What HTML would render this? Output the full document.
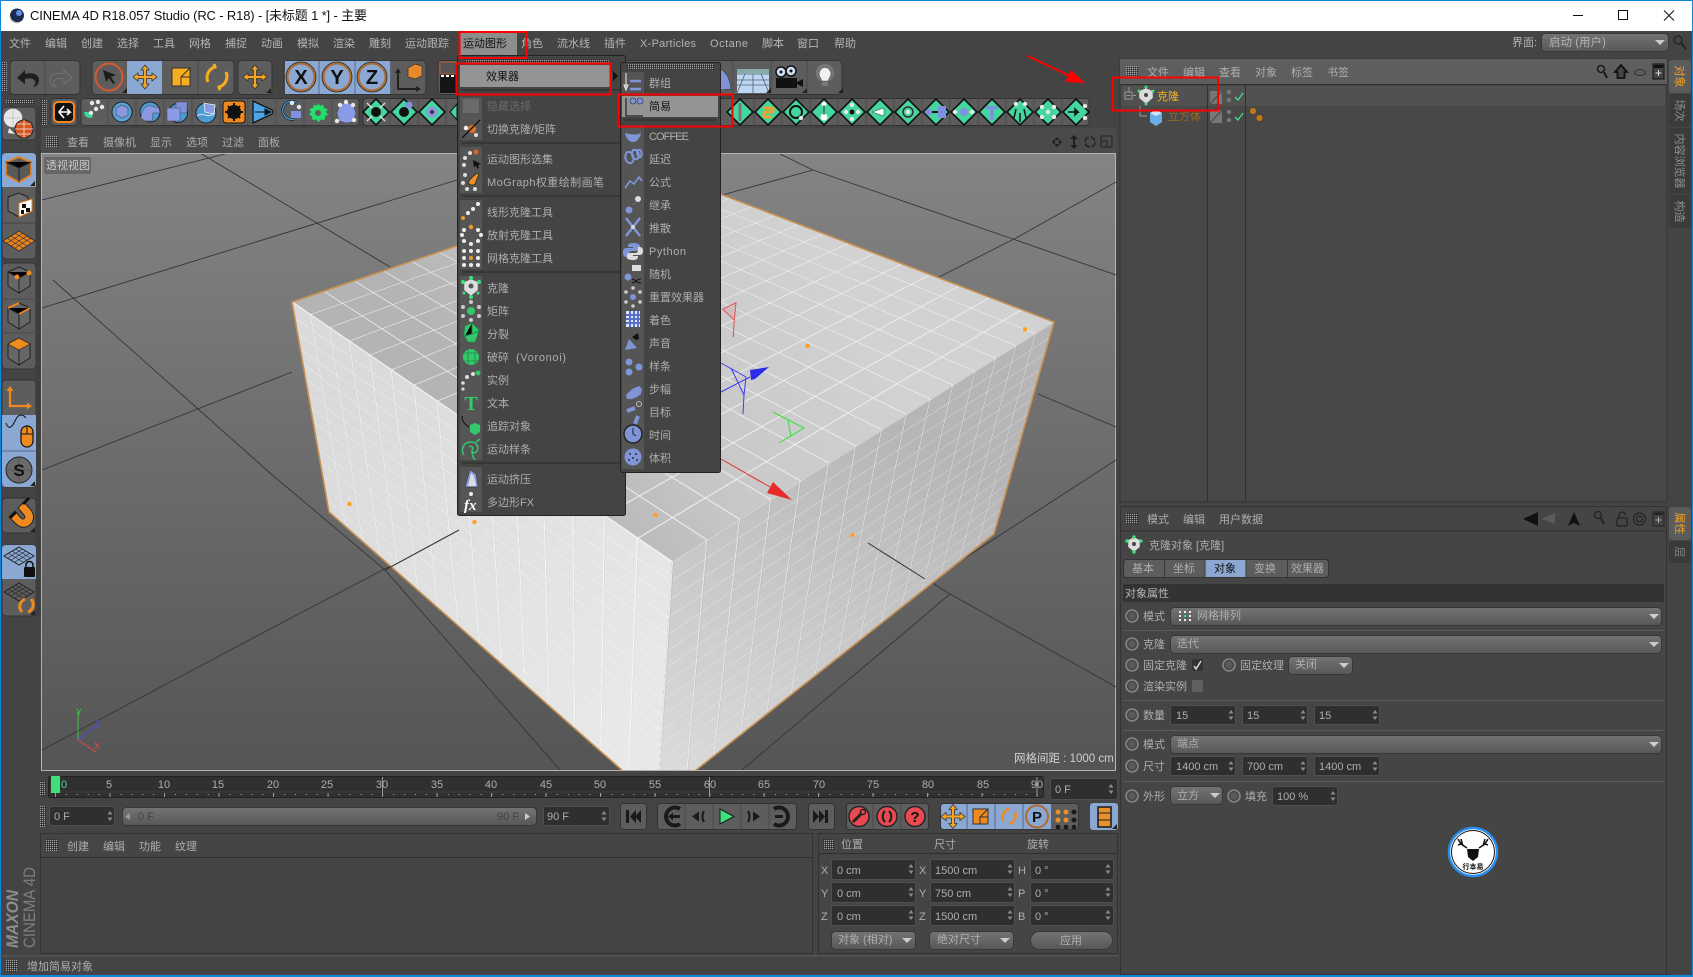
<!DOCTYPE html>
<html><head><meta charset="utf-8"><title>CINEMA 4D</title>
<style>
html,body{margin:0;padding:0;background:#444;width:1693px;height:977px;overflow:hidden}
svg{display:block}
text{font-family:"Liberation Sans","Noto Sans CJK SC",sans-serif;font-size:11px;fill:#aeaeae}
.m{fill:#b4b4b4}
.d{fill:#6a6a6a}
.k{fill:#111}
.g{fill:#5d5d5d;stroke:#333}
.b{fill:#8ba8d2}
.f{fill:#2f2f2f;stroke:#4f4f4f}
.dd{fill:url(#dg);stroke:#383838}
.sep{stroke:#5d5d5d;stroke-width:1}
.fc{position:absolute;left:0;top:0;width:1500px;height:1500px;transform-origin:0 0}
.ft{background-image:repeating-linear-gradient(90deg,rgba(246,246,246,.85) 0 3px,transparent 3px 100px),repeating-linear-gradient(180deg,rgba(246,246,246,.85) 0 3px,transparent 3px 100px);transform:matrix3d(.37409,-.05319,0,.00018477,.12083,.06252,0,-.00019717,0,0,1,0,292,302,0,1)}
.fl{background-image:repeating-linear-gradient(90deg,rgba(250,250,250,.85) 0 3px,rgba(0,0,0,.03) 3px 6px,transparent 6px 100px),repeating-linear-gradient(180deg,rgba(250,250,250,.85) 0 3px,transparent 3px 100px);transform:matrix3d(.12044,.06219,0,-.00019776,.05647,.18948,0,.00009665,0,0,1,0,292,302,0,1)}
.fr{background-image:repeating-linear-gradient(90deg,rgba(242,242,242,.8) 0 3px,rgba(0,0,0,.06) 3px 6px,transparent 6px 100px),repeating-linear-gradient(180deg,rgba(242,242,242,.8) 0 3px,transparent 3px 100px);transform:matrix3d(.52235,-.07822,0,.00025397,.07819,.26686,0,.00013424,0,0,1,0,672,562,0,1)}
</style></head><body>
<svg width="1693" height="977" viewBox="0 0 1693 977" xmlns="http://www.w3.org/2000/svg">
<defs>
<pattern id="grip" width="2" height="2" patternUnits="userSpaceOnUse"><rect width="1" height="1" fill="#a4a4a4"/><rect x="1" y="1" width="1" height="1" fill="#2a2a2a"/></pattern>
<pattern id="tick" width="10.91" height="4" x="55" patternUnits="userSpaceOnUse"><rect width="1" height="1" y="2" fill="#aaa"/></pattern>
<linearGradient id="vp" x1="0" y1="0" x2="0" y2="1"><stop offset="0" stop-color="#848484"/><stop offset=".5" stop-color="#6c6c6c"/><stop offset="1" stop-color="#555"/></linearGradient>
<linearGradient id="dg" x1="0" y1="0" x2="0" y2="1"><stop offset="0" stop-color="#747474"/><stop offset="1" stop-color="#575757"/></linearGradient>
<linearGradient id="top" gradientUnits="userSpaceOnUse" x1="520" y1="470" x2="830" y2="270"><stop offset="0" stop-color="#b4b4b4"/><stop offset=".45" stop-color="#c8c8c8"/><stop offset="1" stop-color="#d2d2d2"/></linearGradient>
<linearGradient id="rf" gradientUnits="userSpaceOnUse" x1="880" y1="420" x2="700" y2="780"><stop offset="0" stop-color="#b6b6b6"/><stop offset="1" stop-color="#dadada"/></linearGradient>
<linearGradient id="lf" gradientUnits="userSpaceOnUse" x1="330" y1="400" x2="660" y2="680"><stop offset="0" stop-color="#dadada"/><stop offset="1" stop-color="#e8e8e8"/></linearGradient>
<clipPath id="vc"><rect x="42" y="154" width="1074" height="616"/></clipPath>
<g id="sp"><path d="M0-5l2.500 3.500h-5zM0 5l2.500-3.500h-5z" fill="#8a8a8a"/></g>
<g id="ar"><path d="M-5-2h10l-5 5z" fill="#ccc"/></g>
<g id="cr"><path d="M0 0h5v-5z" fill="#222"/></g>
<g id="rd"><circle r="6" fill="#484848" stroke="#858585" stroke-width="1.600"/><circle r="3.600" fill="#5a5a5a"/></g>
<g id="di"><path d="M0-13L13 0 0 13-13 0z" fill="#45d6a0" stroke="#111" stroke-width="1.600"/></g>
<g id="mv"><path d="M0-12l4 5h-2.500v5.500H7V-4l5 4-5 4V1.500H1.500V7H4l-4 5-4-5h2.500V1.500H-7V4l-5-4 5-4v2.500h5.500V-7H-4z" fill="#f6a623" stroke="#333" stroke-width=".8"/></g>
<g id="dt"><circle cx="0" cy="0" r="2.200" fill="#e8e8e8"/></g>
</defs>

<rect width="1693" height="977" fill="#444"/>
<!-- title -->
<rect x="1" y="1" width="1691" height="30" fill="#fff"/>
<rect width="1693" height="1" fill="#0f86d8"/><rect width="1" height="977" fill="#0f86d8"/><rect x="1692" width="1" height="977" fill="#0f86d8"/><rect y="975" width="1693" height="2" fill="#0f86d8"/>
<circle cx="17" cy="15.500" r="7" fill="#1c2a52"/><circle cx="19" cy="13" r="3" fill="#5f8fe0"/><path d="M10 16a7 7 0 0 0 10 6" stroke="#bbb" stroke-width="1.200" fill="none"/>
<text x="30" y="20" style="font-size:13px;fill:#111" textLength="337">CINEMA 4D R18.057 Studio (RC - R18) - [未标题 1 *] - 主要</text>
<path d="M1573 15.500h10" stroke="#111" stroke-width="1"/><rect x="1618.500" y="10.500" width="9" height="9" fill="none" stroke="#111"/><path d="M1664 10.500l10 10M1674 10.500l-10 10" stroke="#111"/>

<!-- menu bar -->
<rect x="459" y="32" width="58" height="24" fill="#8d8d8d"/>
<text class="m" x="9" y="47">文件</text><text class="m" x="45" y="47">编辑</text><text class="m" x="81" y="47">创建</text><text class="m" x="117" y="47">选择</text><text class="m" x="153" y="47">工具</text><text class="m" x="189" y="47">网格</text><text class="m" x="225" y="47">捕捉</text><text class="m" x="261" y="47">动画</text><text class="m" x="297" y="47">模拟</text><text class="m" x="333" y="47">渲染</text><text class="m" x="369" y="47">雕刻</text><text class="m" x="405" y="47">运动跟踪</text>
<text class="k" x="463" y="47">运动图形</text>
<text class="m" x="521" y="47">角色</text><text class="m" x="557" y="47">流水线</text><text class="m" x="604" y="47">插件</text><text class="m" x="640" y="47" textLength="56">X-Particles</text><text class="m" x="710" y="47" textLength="38">Octane</text><text class="m" x="762" y="47">脚本</text><text class="m" x="797" y="47">窗口</text><text class="m" x="834" y="47">帮助</text>
<text class="m" x="1512" y="46">界面:</text>
<rect x="1541.500" y="33.500" width="127" height="18" rx="4" class="dd"/><text class="m" x="1549" y="46" style="font-size:11.500px">启动 (用户)</text><use href="#ar" x="1660" y="42"/>
<circle cx="1678" cy="40" r="4" fill="none" stroke="#222" stroke-width="1.300"/><path d="M1681 43l5 6" stroke="#222" stroke-width="2"/>

<!-- toolbar row 1 -->
<rect x="10" y="60.500" width="70" height="34" rx="4" class="g"/><path d="M45 61v33" stroke="#4c4c4c"/>
<path d="M17 78l8-8v4c7-2 14 0 14 6 0 4-3 7-6 7 2-2 3-4 2-6-2-3-6-3-10-2v5z" fill="#1e1e1e"/>
<path d="M72 78l-8-8v4c-7-2-14 0-14 6 0 4 3 7 6 7-2-2-3-4-2-6 2-3 6-3 10-2v5z" fill="none" stroke="#6e6e6e" stroke-width="1.300"/>

<rect x="92" y="60.500" width="142" height="34" rx="4" class="g"/><rect x="127" y="61" width="35" height="33" class="b"/><path d="M198 61v33" stroke="#4c4c4c"/>
<circle cx="109" cy="77" r="13.500" fill="#5d5d5d" stroke="#d9582e" stroke-width="2"/><path d="M103 70l13 5-5 2 4 6-2 1-4-6-3 4z" fill="#1c1c1c"/><use href="#cr" x="122" y="93"/>
<use href="#mv" x="145" y="77"/>
<rect x="172" y="68" width="18" height="18" fill="#f6ae1e" stroke="#333"/><path d="M181 86v-9h9M181 77l9-9" stroke="#333" stroke-width="1" fill="none"/>
<path d="M208 82a11 11 0 0 1 7-15l-1-3M226 72a11 11 0 0 1-7 15l1 3" fill="none" stroke="#f6ae1e" stroke-width="3"/>
<rect x="238" y="60.500" width="34" height="34" rx="4" class="g"/><use href="#mv" x="255" y="77"/><use href="#cr" x="266" y="93"/>

<rect x="284" y="60.500" width="142" height="34" rx="4" class="g"/><rect x="285" y="61" width="105" height="33" class="b"/><path d="M319 61v33M355 61v33M391 61v33" stroke="#586a8c"/>
<circle cx="301" cy="77" r="13.500" fill="#8ba8d2" stroke="#b06a2a" stroke-width="2"/><circle cx="301" cy="77" r="15" fill="none" stroke="#222" stroke-width=".8"/><text x="301" y="84" text-anchor="middle" class="k" style="font-size:20px;font-weight:bold">X</text>
<circle cx="337" cy="77" r="13.500" fill="#8ba8d2" stroke="#b06a2a" stroke-width="2"/><circle cx="337" cy="77" r="15" fill="none" stroke="#222" stroke-width=".8"/><text x="337" y="84" text-anchor="middle" class="k" style="font-size:20px;font-weight:bold">Y</text>
<circle cx="372" cy="77" r="13.500" fill="#8ba8d2" stroke="#b06a2a" stroke-width="2"/><circle cx="372" cy="77" r="15" fill="none" stroke="#222" stroke-width=".8"/><text x="372" y="84" text-anchor="middle" class="k" style="font-size:20px;font-weight:bold">Z</text>
<path d="M398 72v17h18" fill="none" stroke="#222" stroke-width="2"/><path d="M398 68l3 5h-6zM421 89l-5-3v6z" fill="#222"/><path d="M408 68l7-4 7 2v10l-7 3-7-2z" fill="#e88a2a" stroke="#333" stroke-width=".7"/>

<rect x="438" y="60.500" width="404" height="34" rx="4" class="g"/>
<rect x="440" y="62" width="18" height="31" fill="#151515"/><rect x="440" y="62" width="18" height="12" fill="#555" stroke="#c05a30"/><path d="M441 76h16" stroke="#fff" stroke-dasharray="3 2" stroke-width="2"/>
<path d="M720 69c6 2 10 10 11 20l-11 1z" fill="#8192da" stroke="#333" stroke-width=".6"/><path d="M733 61v33M771 61v33M807 61v33" stroke="#4c4c4c"/>
<rect x="737" y="69" width="32" height="24" fill="#bcd6f4"/><path d="M737 80h32M737 85h32M747 69l-10 24M753 69v24M759 69l10 24M737 74h32" stroke="#56606e" stroke-width=".8"/><rect x="737" y="69" width="32" height="5" fill="#8aa"/>
<use href="#cr" x="766" y="93"/><use href="#cr" x="802" y="93"/><use href="#cr" x="838" y="93"/>
<circle cx="781" cy="72" r="5" fill="#cfdff5" stroke="#111" stroke-width="1.500"/><circle cx="791" cy="71" r="5" fill="#cfdff5" stroke="#111" stroke-width="1.500"/><circle cx="781" cy="72" r="1.500" fill="#111"/><circle cx="791" cy="71" r="1.500" fill="#111"/><rect x="776" y="78" width="21" height="10" fill="#111"/><path d="M797 82l6-3v8l-6-3z" fill="#111"/>
<circle cx="825" cy="73" r="9" fill="#8c8c8c" opacity=".6"/><path d="M819 74a6 6.500 0 1 1 12 0c0 3-2.500 4-2.500 7h-7c0-3-2.500-4-2.500-7z" fill="#f0f0f0" stroke="#444" stroke-width=".6"/><rect x="822" y="82" width="6" height="4" fill="#777"/>

<!-- toolbar row 2 -->
<rect x="51" y="98.500" width="26" height="27" rx="3" class="g"/><rect x="54" y="102" width="20" height="20" rx="4" fill="#111" stroke="#f08a1e" stroke-width="2"/><path d="M60 112h10l-3-3M70 112l-3 3M64 106l-5 6 5 6" stroke="#fff" stroke-width="1.600" fill="none"/>
<rect x="81" y="98.500" width="278" height="27" rx="3" class="g"/>
<path d="M108 99v26M136 99v26M164 99v26M192 99v26M220 99v26M248 99v26M276 99v26M304 99v26M332 99v26" stroke="#4c4c4c"/>
<path d="M84 112c1 6 5 7 9 5l-2-5z" fill="#3dd598"/><use href="#dt" x="92" y="103"/><use href="#dt" x="98" y="102"/><use href="#dt" x="96" y="109"/><use href="#dt" x="102" y="107"/><use href="#dt" x="91" y="113"/>
<circle cx="122" cy="112" r="10" fill="#57a2d8" stroke="#222"/><path d="M122 105l6 3v7l-6 3-6-3v-7z" fill="#8a9ae0" stroke="#444" stroke-width=".6"/>
<circle cx="150" cy="112" r="10" fill="#4b9bd4" stroke="#222"/><path d="M141 118c1-9 5-13 10-12l8 2 1 5-7 0-1 8-7 0z" fill="#8a9ae0" stroke="#444" stroke-width=".5"/>
<circle cx="178" cy="113" r="9.500" fill="#4b9bd4" stroke="#222"/><rect x="176" y="102" width="11" height="11" fill="#7f90e0" stroke="#444" stroke-width=".5"/><rect x="167" y="108" width="13" height="13" fill="#8a9ae6" stroke="#444" stroke-width=".5"/>
<circle cx="206" cy="113" r="10" fill="#4b9bd4" stroke="#222"/><path d="M204 103l11 2-1 9-9-2zM197 116c6-5 10 3 17-2" fill="#8a9ae0" stroke="#eee" stroke-width=".8"/>
<rect x="223" y="101" width="22" height="22" rx="3" fill="#f08a1e" stroke="#111"/><circle cx="234" cy="112" r="7" fill="#111"/><circle cx="234" cy="112" r="2.500" fill="#f08a1e"/><path d="M234 103v18M225 112h18M228 106l12 12M240 106l-12 12" stroke="#111" stroke-width="2"/>
<path d="M253 101l19 9q2 2 0 4l-19 9z" fill="#4ba6e8" stroke="#111" stroke-width="1.300"/><path d="M255 112h10v-3l6 3-6 3v-3" fill="#111" stroke="#111"/>
<path d="M297 103a9 9 0 1 0-3 16" fill="none" stroke="#111" stroke-width="2.500"/><path d="M297 103a9 9 0 1 0-3 16" fill="none" stroke="#4ba6e8" stroke-width="1.200"/><rect x="291" y="111" width="10" height="7" fill="#7f90e0"/><use href="#dt" x="292" y="103"/><use href="#dt" x="299" y="107"/>
<path d="M318 103l2 3 3-1.500 1 3.500 3.500 1-1.500 3 2 2.500-3 2-.5 3.500-3.500-.5-2.500 2.500-2.500-2.500-3.500.5-.5-3.500-3-2 2-2.500-1.500-3 3.500-1 1-3.500 3 1.500z" fill="#22e06a"/><circle cx="318" cy="113" r="3" fill="#5d5d5d"/>
<path d="M340 105l6-3 7 3 3 8-3 9-7 1-7-2-2-8z" fill="#8a9ae6" stroke="#444" stroke-width=".5"/><use href="#dt" x="340" y="105"/><use href="#dt" x="353" y="105"/><use href="#dt" x="337" y="121"/><use href="#dt" x="354" y="120"/><use href="#dt" x="346" y="102"/>

<rect x="363" y="98.500" width="726" height="27" rx="3" class="g"/>
<path d="M390 99v26M418 99v26M446 99v26M754 99v26M782 99v26M810 99v26M838 99v26M866 99v26M894 99v26M922 99v26M950 99v26M978 99v26M1006 99v26M1034 99v26M1062 99v26" stroke="#4c4c4c"/>
<use href="#di" x="376" y="112"/><circle cx="376" cy="112" r="5" fill="#111"/><path d="M367 103l5 5M385 103l-5 5M367 121l5-5M385 121l-5-5" stroke="#ddd" stroke-width="1.500"/>
<use href="#di" x="404" y="112"/><circle cx="404" cy="112" r="5" fill="#111"/><circle cx="409" cy="105" r="3.500" fill="#7f90e0"/>
<use href="#di" x="432" y="112"/><circle cx="432" cy="112" r="5.500" fill="#8a9ae0"/><circle cx="432" cy="112" r="2" fill="#333"/>
<path d="M457 104l-7 8 7 8z" fill="#45d6a0" stroke="#111"/>
<use href="#di" x="740" y="112"/><path d="M740 103v18" stroke="#777" stroke-width="3"/>
<use href="#di" x="768" y="112"/><path d="M763 108h8c3 0 3 4 0 4h-5c-3 0-3 5 0 5h6" stroke="#f0a030" stroke-width="3" fill="none"/>
<use href="#di" x="796" y="112"/><circle cx="796" cy="112" r="6" fill="none" stroke="#111" stroke-width="2"/><use href="#dt" x="801" y="118"/>
<use href="#di" x="824" y="112"/><circle cx="824" cy="104" r="2.500" fill="#fff"/><circle cx="824" cy="117" r="3.500" fill="#fff"/><path d="M824 105v10" stroke="#333"/>
<use href="#di" x="852" y="112"/><circle cx="852" cy="112" r="2.500" fill="#111"/><use href="#dt" x="852" y="105"/><use href="#dt" x="846" y="112"/><use href="#dt" x="858" y="112"/><use href="#dt" x="852" y="119"/>
<use href="#di" x="880" y="112"/><path d="M872 112l12-4v8z" fill="#fff" stroke="#333" stroke-width=".5"/>
<use href="#di" x="908" y="112"/><circle cx="908" cy="112" r="5" fill="none" stroke="#333" stroke-width="1.500"/><use href="#dt" x="908" y="112"/>
<use href="#di" x="936" y="112"/><circle cx="929" cy="112" r="3.500" fill="#7f90e0"/><rect x="938" y="106" width="8" height="12" fill="#7f90e0"/><path d="M932 112h6" stroke="#111" stroke-width="2"/>
<use href="#di" x="964" y="112"/><circle cx="964" cy="112" r="4" fill="#7f90e0"/><use href="#dt" x="955" y="112"/><use href="#dt" x="972" y="112"/>
<use href="#di" x="992" y="112"/><path d="M986 106h12v3h-4v11h-4v-11h-4z" fill="#7f90e0"/>
<use href="#di" x="1020" y="112"/><path d="M1020 122v-9M1014 118l2-9M1026 118l-2-9" stroke="#111" stroke-width="1.500"/><use href="#dt" x="1016" y="104"/><use href="#dt" x="1025" y="104"/>
<use href="#di" x="1048" y="112"/><use href="#dt" x="1048" y="112"/><use href="#dt" x="1042" y="107"/><use href="#dt" x="1054" y="107"/><use href="#dt" x="1042" y="117"/><use href="#dt" x="1054" y="117"/>
<use href="#di" x="1076" y="112"/><path d="M1068 112h10l-3-3v6l3-3" stroke="#111" fill="none" stroke-width="1.500"/><use href="#dt" x="1085" y="106"/><use href="#dt" x="1085" y="118"/>
<rect x="41" y="99" width="6" height="26" fill="url(#grip)"/><rect x="2" y="62" width="5" height="30" fill="url(#grip)"/><rect x="6" y="99" width="28" height="5" fill="url(#grip)"/>

<!-- left toolbar -->
<rect x="2" y="107" width="34" height="33" rx="4" class="g"/>
<circle cx="13" cy="118" r="9.500" fill="#e8e8e8" stroke="#777" stroke-width=".6"/><path d="M13 109v18M4 118h18" stroke="#aaa" stroke-width=".5"/><path d="M9 128l6 6-7-1z" fill="#e8e8e8"/>
<circle cx="24" cy="129" r="9" fill="#d8541e" stroke="#222"/><path d="M24 120v18M15 129h18M17 124h14M17 134h14" stroke="#eee" stroke-width=".7"/>
<rect x="2" y="153" width="34" height="106" rx="4" class="g"/><path d="M2 157q0-4 4-4h26q4 0 4 4v30H2z" class="b"/><path d="M2 223h34" stroke="#444"/>
<path d="M19 157l12 5v13l-12 7-13-7v-13z" fill="#5a5a5a" stroke="#e8821e" stroke-width="1.800"/><path d="M6 162l13 6 12-6M19 168v14" stroke="#222" stroke-width="1"/><use href="#cr" x="30" y="186"/>
<path d="M8 197l11-4 9 4v14l-9 6-11-6z" fill="#6c6c6c" stroke="#222"/><path d="M19 203l13-4v12l-13 6z" fill="#fff" stroke="#e8821e"/><path d="M22 204h4v4h-4zM26 208h4v4h-4zM21 210h3v4h-3z" fill="#111"/>
<path d="M19 231l16 10-16 10-16-10z" fill="#e8821e" stroke="#333"/><path d="M11 236l16 10M15 233l16 10M7 238l16 10M23 233l-16 10M27 236l-16 10M31 238l-16 10" stroke="#333" stroke-width=".7"/>
<rect x="2" y="263" width="34" height="106" rx="4" class="g"/><path d="M2 299h34M2 333h34" stroke="#4c4c4c"/>
<path d="M8 272l11-5 11 5v14l-11 7-11-7z" fill="#666" stroke="#222"/><path d="M8 272l11 6 11-6M19 278v15" stroke="#222"/><circle cx="17" cy="277" r="2.500" fill="#f08a1e"/><circle cx="29" cy="273" r="2.500" fill="#f08a1e"/>
<path d="M8 308l11-5 11 5v14l-11 7-11-7z" fill="#666" stroke="#222"/><path d="M8 308l11 6 11-6M19 314v15" stroke="#222"/><path d="M8 308l11-5M19 314l11-6" stroke="#f08a1e" stroke-width="1.800"/>
<path d="M8 344l11-6 11 6v14l-11 7-11-7z" fill="#666" stroke="#222"/><path d="M8 344l11-6 11 6-11 6z" fill="#f08a1e" stroke="#222" stroke-width=".6"/><path d="M19 350v15" stroke="#222"/>
<rect x="2" y="380" width="34" height="107" rx="4" class="g"/><path d="M2 415h34v68q0 4-4 4H6q-4 0-4-4z" class="b"/><path d="M2 451h34" stroke="#586a8c"/>
<path d="M10 389v17h19" fill="none" stroke="#f08a1e" stroke-width="2.200"/><path d="M10 386l3.500 5h-7zM32 406l-5-3.500v7z" fill="#f08a1e"/>
<rect x="21" y="426" width="12" height="21" rx="6" fill="#f08a1e" stroke="#111" stroke-width="1.200"/><path d="M21 434h12M27 426v8" stroke="#111"/><path d="M6 423c4 10 8 0 10-4s6-6 10-1" stroke="#111" fill="none" stroke-width="1"/>
<circle cx="19" cy="470" r="13" fill="#6a6a6a" stroke="#222"/><path d="M19 457v26M6 470h26" stroke="#555"/><text x="19" y="476" text-anchor="middle" class="k" style="font-size:17px;font-weight:bold">S</text><use href="#cr" x="30" y="486"/>
<rect x="2" y="498" width="34" height="35" rx="4" class="g"/><path d="M9 517l6-6 6 7c3 3 5-1 3-3l-6-7 6-6 7 8c5 7 2 15-5 17-5 1-8-1-11-4z" fill="#f08a1e" stroke="#222"/><path d="M9 517l6-6 2 2-6 6zM22 503l6-6 2 2-6 6z" fill="#111"/><use href="#cr" x="30" y="532"/>
<rect x="2" y="545" width="34" height="71" rx="4" class="g"/><path d="M2 549q0-4 4-4h26q4 0 4 4v30H2z" class="b"/>
<path d="M19 547l15 9-15 9-15-9z" fill="none" stroke="#222"/><path d="M12 551l15 9M15.500 549l15 9M8 553l15 9M26 551l-15 9M22.500 549l-15 9M30 553l-15 9" stroke="#222" stroke-width=".6"/><rect x="24" y="567" width="11" height="10" rx="1" fill="#111"/><path d="M26 568v-3a3.500 3.500 0 0 1 7 0v3" fill="none" stroke="#111" stroke-width="1.500"/>
<path d="M19 583l15 9-15 9-15-9z" fill="none" stroke="#222"/><path d="M12 587l15 9M15.500 585l15 9M8 589l15 9M26 587l-15 9M22.500 585l-15 9M30 589l-15 9" stroke="#222" stroke-width=".6"/><path d="M22 612a8 8 0 0 1 3-13M31 599a8 8 0 0 1-3 13" fill="none" stroke="#f08a1e" stroke-width="3"/><use href="#cr" x="30" y="615"/>
<path d="M36 107h5v510h-5z" fill="#3e3e3e"/>

<!-- viewport -->
<rect x="41" y="128" width="1075" height="26" fill="#4a4a4a"/>
<rect x="46" y="136" width="12" height="11" fill="url(#grip)"/>
<text x="67" y="146">查看</text><text x="103" y="146">摄像机</text><text x="150" y="146">显示</text><text x="186" y="146">选项</text><text x="222" y="146">过滤</text><text x="258" y="146">面板</text>
<g fill="#1f1f1f"><path d="M1057 137l3 3h-6zM1057 147l3-3h-6zM1052 142l3-3v6zM1062 142l-3-3v6z"/><path d="M1074 135l4 4h-3v6h3l-4 4-4-4h3v-6h-3z"/></g>
<circle cx="1090" cy="142" r="5" fill="none" stroke="#222" stroke-width="1.500" stroke-dasharray="6 2"/><rect x="1101" y="136" width="11" height="11" rx="1" fill="none" stroke="#222"/><path d="M1101 141h6v6" fill="none" stroke="#222"/>
<rect x="41.500" y="153.500" width="1074" height="617" fill="url(#vp)" stroke="#b4b4b4"/>
<g clip-path="url(#vc)">
<g stroke="#353535" stroke-width=".9" fill="none">
<path d="M42 200L225 154M200 153L390 267M42 308L457 180M42 470L292 372M53 280L270 473L385 570L560 770M42 750L270 629L459 530M939 277L1016 238L1116 182M1038 394L1116 427M813 170L1010 238L1116 275M722 195L813 170M931 580L1116 460M868 543L950 594L1116 687M950 594L742 770M813 170L780 154"/>
</g>
<path d="M292 302L668 174 1054 322 672 562z" fill="url(#top)"/>
<path d="M292 302L672 562 657 801 329 512z" fill="url(#lf)"/>
<path d="M672 562L1054 322 994 534 657 801z" fill="url(#rf)"/>
</g>
</svg>

<!-- cube clone grid (projective CSS mapping) -->
<div style="position:absolute;left:42px;top:154px;width:1074px;height:616px;overflow:hidden"><div style="position:absolute;left:-42px;top:-154px;width:0;height:0"><div class="fc ft"></div><div class="fc fl"></div><div class="fc fr"></div></div></div>

<svg width="1693" height="977" viewBox="0 0 1693 977" xmlns="http://www.w3.org/2000/svg" style="position:absolute;left:0;top:0">
<g clip-path="url(#vc)">
<path d="M292 302L668 174 1054 322 994 534 657 801 329 512z" fill="none" stroke="#c89050" stroke-width="1.600"/>
<path d="M459 530L385 570M868 543L925 579" stroke="#333" stroke-width="1"/>
<g fill="#ffa020"><circle cx="349.500" cy="504" r="2.200"/><circle cx="474.500" cy="522" r="2.200"/><circle cx="655.500" cy="515" r="2.200"/><circle cx="852.500" cy="535" r="2.200"/><circle cx="807.500" cy="346" r="2.200"/><circle cx="1025" cy="329.500" r="2.200"/></g>
<path d="M722.700 309.300L736 302.700 734.300 320zM734.300 320L733.300 337" fill="#d8a0a0" fill-opacity=".4" stroke="#e05050" stroke-width="1"/>
<path d="M721 363L746 377M746 377L744 395 743 414M731 368L744 395M721 392L750 377" stroke="#3a3af0" stroke-width="1" fill="none"/><path d="M750 370L769 367 755 379 751 380z" fill="#2a2ae8"/>
<path d="M773 412L804 428 779 443M788 420L791 436" stroke="#2ee03a" stroke-width="1" fill="none"/>
<path d="M721 459L770 487" stroke="#e83030" stroke-width="1"/><path d="M773 482L792 500 767 493z" fill="#e82a2a"/>
<g stroke="#333" fill="none"><path d="M78 740l0-28" stroke="#3cc83c" stroke-width="1"/><path d="M78 740l18 -14" stroke="#4a4ae0" stroke-width="1"/><path d="M78 740l18 12" stroke="#e04a4a" stroke-width="1"/></g>
<text x="76" y="715" style="font-size:9px;fill:#3cc83c">Y</text><text x="95" y="727" style="font-size:9px;fill:#4a4ae0">Z</text><text x="94" y="749" style="font-size:9px;fill:#e04a4a">X</text>
</g>
<rect x="44" y="157" width="47" height="17" rx="2" fill="#666"/><text x="46" y="169" style="fill:#c8c8c8">透视视图</text>
<rect x="1011" y="750" width="102" height="18" fill="#555"/><text x="1014" y="762" style="fill:#d0d0d0;font-size:11.500px">网格间距 : 1000 cm</text>

<!-- main menu -->
<rect x="457.500" y="55.500" width="168" height="460" rx="2" fill="#444" stroke="#222"/>
<rect x="465" y="59" width="145" height="4" fill="url(#grip)"/>
<rect x="460" y="65" width="150" height="22" fill="#949494"/>
<text class="k" x="486" y="80">效果器</text><path d="M613 71l5 5-5 5z" fill="#111"/>
<path d="M462 90h160M462 143h160M462 196h160M462 272h160M462 463h160" stroke="#333" stroke-width="1.500"/>
<rect x="460" y="97" width="22" height="43" fill="#555"/><rect x="460" y="147" width="22" height="46" fill="#555"/><rect x="460" y="200" width="22" height="69" fill="#555"/><rect x="460" y="276" width="22" height="184" fill="#555"/><rect x="460" y="467" width="22" height="45" fill="#555"/>
<text x="487" y="110" class="d">隐藏选择</text><text x="487" y="133">切换克隆/矩阵</text><text x="487" y="163">运动图形选集</text><text x="487" y="186" textLength="117">MoGraph权重绘制画笔</text><text x="487" y="216">线形克隆工具</text><text x="487" y="239">放射克隆工具</text><text x="487" y="262">网格克隆工具</text><text x="487" y="292">克隆</text><text x="487" y="315">矩阵</text><text x="487" y="338">分裂</text><text x="487" y="361">破碎</text><text x="516" y="361" textLength="50">(Voronoi)</text><text x="487" y="384">实例</text><text x="487" y="407">文本</text><text x="487" y="430">追踪对象</text><text x="487" y="453">运动样条</text><text x="487" y="483">运动挤压</text><text x="487" y="506">多边形FX</text>
<rect x="463" y="99" width="16" height="14" fill="#6a6a6a"/>
<circle cx="466" cy="128" r="2.200" fill="#fff"/><circle cx="476" cy="135" r="2" fill="#ddd"/><circle cx="472" cy="129" r="4" fill="#e0702a"/><path d="M462 138l18-18" stroke="#111" stroke-width="1.300"/>
<circle cx="464" cy="165" r="2" fill="#ddd"/><circle cx="465" cy="158" r="2" fill="#ddd"/><circle cx="470" cy="153" r="2" fill="#ddd"/><circle cx="476" cy="152" r="2.500" fill="#e0602a"/><path d="M473 160l8 4-3 1 1 3-2 .5-1-3-2 2z" fill="#111"/>
<circle cx="465" cy="175" r="2" fill="#ddd"/><circle cx="463" cy="183" r="2" fill="#ddd"/><circle cx="467" cy="189" r="2" fill="#ddd"/><circle cx="475" cy="189" r="2" fill="#ddd"/><path d="M468 183c2-5 6-7 9-10l2 1-4 10c-2 2-5 1-7-1z" fill="#e8902a" stroke="#111" stroke-width=".6"/>
<circle cx="463" cy="218" r="2" fill="#f09a30"/><circle cx="468" cy="213" r="2" fill="#eee"/><circle cx="473" cy="209" r="2" fill="#eee"/><circle cx="478" cy="204" r="2" fill="#eee"/>
<g fill="#eee"><circle cx="471" cy="227" r="2.200" fill="#f09a30"/><circle cx="478" cy="230" r="2"/><circle cx="481" cy="235" r="2"/><circle cx="478" cy="241" r="2"/><circle cx="471" cy="244" r="2"/><circle cx="464" cy="241" r="2"/><circle cx="462" cy="235" r="2"/><circle cx="464" cy="230" r="2"/></g>
<g fill="#eee"><circle cx="464" cy="251" r="2"/><circle cx="471" cy="251" r="2"/><circle cx="478" cy="251" r="2"/><circle cx="464" cy="258" r="2"/><circle cx="471" cy="258" r="2" fill="#f09a30"/><circle cx="478" cy="258" r="2"/><circle cx="464" cy="265" r="2"/><circle cx="471" cy="265" r="2"/><circle cx="478" cy="265" r="2"/></g>
<path d="M464 282l7-3 7 3 0 8-7 6-7-6z" fill="#ddd" stroke="#666" stroke-width=".5"/><circle cx="471" cy="286" r="2.500" fill="#555"/><g fill="#3de07a"><circle cx="471" cy="278" r="2"/><circle cx="463" cy="282" r="2"/><circle cx="479" cy="282" r="2"/><circle cx="471" cy="297" r="2"/><circle cx="464" cy="293" r="1.500"/><circle cx="478" cy="293" r="1.500"/></g>
<g fill="#ccc"><circle cx="471" cy="302" r="2"/><circle cx="463" cy="307" r="2"/><circle cx="479" cy="307" r="2"/><circle cx="463" cy="316" r="2"/><circle cx="479" cy="316" r="2"/><circle cx="471" cy="320" r="2"/></g><circle cx="471" cy="311" r="4" fill="#35c86a"/>
<path d="M465 326l7-3 4 4 3 3-2 7-2 5-7 0-4-7z" fill="#35c86a" stroke="#1c8a4a" stroke-width=".7"/><path d="M472 323v11l-7 2M472 334l7-3" stroke="#1c8a4a"/>
<circle cx="471" cy="357" r="8" fill="#35c86a"/><path d="M464 353h14M464 361h14M468 349v16M475 349v16" stroke="#1c8a4a" stroke-width=".8"/>
<circle cx="463" cy="389" r="1.600" fill="#ddd"/><circle cx="463" cy="383" r="1.800" fill="#ddd"/><circle cx="467" cy="377" r="2" fill="#ddd"/><circle cx="473" cy="374" r="2" fill="#ddd"/><circle cx="478" cy="373" r="2.500" fill="#35c86a"/>
<text x="471" y="410" text-anchor="middle" style="font-family:'Liberation Serif',serif;font-size:20px;font-weight:bold;fill:#35c86a">T</text>
<path d="M462 416c0 5 2 8 7 11" stroke="#111" fill="none"/><path d="M470 425l5-2 5 2v7l-5 3-5-3z" fill="#35c86a"/>
<path d="M464 455c-4-6 0-13 7-13 6 0 8 5 6 9-2 3-5 2-5-1 2-2 0-5-3-3M472 450c0 5 1 8 3 10M476 442l4-3" fill="none" stroke="#35c86a" stroke-width="1.500"/>
<path d="M470 470l6 4 2 13h-13z" fill="#8a9ae6" stroke="#333" stroke-width=".5"/><path d="M471 473c3 2 4 6 5 13h-8z" fill="#ddd"/>
<circle cx="471" cy="494" r="2" fill="#eee"/><text x="464" y="510" style="font-family:'Liberation Serif',serif;font-size:15px;font-weight:bold;font-style:italic;fill:#fff">fx</text>

<!-- submenu -->
<rect x="620.500" y="62.500" width="100" height="410" rx="2" fill="#444" stroke="#222"/>
<rect x="627" y="64" width="87" height="6" fill="url(#grip)"/>
<rect x="622" y="72" width="22" height="22" fill="#555"/><rect x="622" y="96" width="96" height="21" fill="#949494"/><rect x="622" y="125" width="22" height="344" fill="#555"/>
<path d="M624 120h92" stroke="#333" stroke-width="1.500"/>
<text x="649" y="87">群组</text><text x="649" y="110" class="k">简易</text><text x="649" y="140" textLength="40">COFFEE</text><text x="649" y="163">延迟</text><text x="649" y="186">公式</text><text x="649" y="209">继承</text><text x="649" y="232">推散</text><text x="649" y="255" textLength="37">Python</text><text x="649" y="278">随机</text><text x="649" y="301">重置效果器</text><text x="649" y="324">着色</text><text x="649" y="347">声音</text><text x="649" y="370">样条</text><text x="649" y="393">步幅</text><text x="649" y="416">目标</text><text x="649" y="439">时间</text><text x="649" y="462">体积</text>
<path d="M626 73v15M626 85l-2 0 2 5 2-5z" stroke="#eee" fill="none"/><path d="M630 81h11M630 89h11" stroke="#7f95d8" stroke-width="2.500"/>
<path d="M626 98v18h17" stroke="#222" fill="none" stroke-width="1.200"/><circle cx="633" cy="101" r="3" fill="#7f95d8" stroke="#234" stroke-width=".6"/><circle cx="640" cy="101" r="3" fill="#7f95d8" stroke="#234" stroke-width=".6"/>
<path d="M625 133c8 2 12 2 16 0-1 5-4 9-8 9s-7-4-8-9z" fill="#7f95d8"/>
<path d="M627 152c-4 6 0 12 4 11 4-1 3-9-1-11zM633 150c-3 5 1 10 4 9 3-1 2-8-1-9zM638 150c-2 3 0 7 2 7s2-6 0-7z" fill="none" stroke="#7f95d8" stroke-width="2"/>
<path d="M625 188l5-7 4 3 5-7 3 4" stroke="#7f95d8" fill="none" stroke-width="1.600"/>
<circle cx="629" cy="210" r="3.500" fill="#7f95d8"/><circle cx="638" cy="199" r="3" fill="#ddd"/><path d="M633 205l2-2" stroke="#888" stroke-dasharray="1 1"/>
<path d="M626 218l14 18M640 218l-14 18" stroke="#7f95d8" stroke-width="2.500"/><circle cx="633" cy="227" r="2" fill="#ddd"/>
<path d="M633 243c-5 0-5 2-5 4h5v1h-7c-2 0-3 2-3 4 0 3 1 5 3 5h3v-3c0-2 1-3 3-3h5c2 0 3-1 3-3v-2c0-2-3-3-7-3z" fill="#7f95d8"/><path d="M633 260c5 0 5-2 5-4h-5v-1h7c2 0 3-2 3-4s-1-4-3-4h-2v3c0 2-1 3-3 3h-5c-2 0-3 1-3 3v2c0 1 3 2 6 2z" fill="#ddd"/>
<circle cx="628" cy="277" r="3.500" fill="#7f95d8"/><rect x="632" y="265" width="9" height="6" fill="#ddd"/><path d="M632 279c4 0 4 4 9 4M632 283c4 0 4-4 9-4" stroke="#111" fill="none"/>
<g fill="#7f95d8"><circle cx="633" cy="297" r="3"/></g><g fill="#ccc"><circle cx="633" cy="288" r="1.800"/><circle cx="640" cy="292" r="1.800"/><circle cx="640" cy="302" r="1.800"/><circle cx="633" cy="306" r="1.800"/><circle cx="626" cy="302" r="1.800"/><circle cx="626" cy="292" r="1.800"/></g>
<rect x="626" y="311" width="14" height="16" fill="#dfe6ff"/><path d="M626 315h14M626 319h14M626 323h14M630 311v16M634 311v16M638 311v16" stroke="#5a70c8" stroke-width="2"/>
<path d="M625 350l4-11 8 9z" fill="#7f95d8"/><path d="M632 337l6-4 1 6-3 1z" fill="#111"/>
<circle cx="629" cy="362" r="3.500" fill="#7f95d8"/><circle cx="639" cy="367" r="3.500" fill="#7f95d8"/><circle cx="629" cy="372" r="3.500" fill="#7f95d8"/>
<path d="M626 395l4-4 4-3 5-2 3 3-1 5-4 3-5 2-5 0z" fill="#7f95d8"/>
<path d="M627 411l8-3" stroke="#7f95d8" stroke-width="4"/><path d="M635 424l3-8" stroke="#7f95d8" stroke-width="4"/><circle cx="639" cy="404" r="2.500" fill="none" stroke="#bbb"/>
<circle cx="633" cy="434" r="9" fill="#7f95d8" stroke="#222" stroke-width="1.500"/><path d="M633 428v6l3 2" stroke="#222" fill="none"/>
<circle cx="633" cy="457" r="8.500" fill="#7f95d8"/><g fill="#333"><circle cx="630" cy="454" r="1"/><circle cx="636" cy="454" r="1"/><circle cx="633" cy="458" r="1"/><circle cx="629" cy="460" r="1"/><circle cx="637" cy="460" r="1"/></g>

<!-- object manager -->
<rect x="1120" y="59" width="547" height="443" fill="#484848" stroke="#333"/>
<rect x="1120" y="59" width="547" height="25" fill="#5e5e5e"/>
<path d="M1120 84.500h547" stroke="#2f2f2f"/>
<rect x="1126" y="66" width="12" height="11" fill="url(#grip)"/>
<text x="1147" y="76">文件</text><text x="1183" y="76">编辑</text><text x="1219" y="76">查看</text><text x="1255" y="76">对象</text><text x="1291" y="76">标签</text><text x="1327" y="76">书签</text>
<circle cx="1601" cy="69" r="3.500" fill="none" stroke="#111" stroke-width="1.300"/><path d="M1604 72l3 6" stroke="#111" stroke-width="1.800"/>
<path d="M1621 65l-6 7h2.500v6h7v-6h2.500z" fill="#444" stroke="#111" stroke-width="1.800"/><ellipse cx="1640" cy="72.500" rx="5.500" ry="3" fill="none" stroke="#333"/><rect x="1653" y="64" width="11" height="15" fill="#444" stroke="#111"/><path d="M1654 65h9v3h-9z" fill="#111"/><path d="M1655.500 73h6M1658.500 70v6" stroke="#ddd"/>
<rect x="1122" y="86" width="543" height="20" fill="#515151"/>
<path d="M1207.500 85v417M1245.500 85v417" stroke="#303030"/>
<rect x="1125" y="92" width="7" height="7" fill="none" stroke="#999"/><path d="M1126.500 95.500h4M1129 87v5M1133 95.500h3" stroke="#999"/>
<path d="M1139 91l7-3 7 3 0 7-7 6-7-6z" fill="#ddd" stroke="#555" stroke-width=".5"/><circle cx="1146" cy="95" r="2" fill="#444"/><g fill="#3de07a"><circle cx="1146" cy="87" r="1.500"/><circle cx="1139" cy="91" r="1.500"/><circle cx="1153" cy="91" r="1.500"/><circle cx="1146" cy="104" r="1.500"/></g>
<text x="1157" y="100" style="fill:#f2b61e;font-size:11px">克隆</text>
<path d="M1140 106v10h7" fill="none" stroke="#999"/>
<path d="M1150 113l6-3 6 3v9l-6 4-6-4z" fill="#6aaee8"/><path d="M1150 113l6 3 6-3v0l-6-3z" fill="#cfe4f8"/>
<text x="1168" y="120" style="fill:#9a6a20">立方体</text>
<rect x="1210" y="91" width="12" height="13" fill="#777"/><rect x="1210" y="110" width="12" height="13" fill="#777"/><path d="M1210 104l12-13M1210 123l12-13" stroke="#444"/>
<g fill="#777"><circle cx="1229" cy="92" r="2.200"/><circle cx="1229" cy="100" r="2.200"/><circle cx="1229" cy="112" r="2.200"/><circle cx="1229" cy="120" r="2.200"/></g>
<path d="M1235 97l3 3 5-7M1235 117l3 3 5-7" stroke="#3de08a" fill="none" stroke-width="1.300"/>
<circle cx="1253" cy="111" r="3.400" fill="#c07818" stroke="#333" stroke-width=".5"/><circle cx="1259.500" cy="118" r="3.400" fill="#c07818" stroke="#333" stroke-width=".5"/>

<!-- right tabs -->
<rect x="1669" y="60" width="22" height="33" rx="3" fill="#5c5c5c"/><rect x="1669" y="94" width="22" height="33" rx="3" fill="#3b3b3b"/><rect x="1669" y="128" width="22" height="66" rx="3" fill="#3b3b3b"/><rect x="1669" y="195" width="22" height="33" rx="3" fill="#3b3b3b"/>
<text transform="translate(1676,76.500) rotate(90)" text-anchor="middle" style="fill:#f2a020">对象</text>
<text transform="translate(1676,110.500) rotate(90)" text-anchor="middle" style="fill:#909090">场次</text>
<text transform="translate(1676,161) rotate(90)" text-anchor="middle" style="fill:#909090">内容浏览器</text>
<text transform="translate(1676,211.500) rotate(90)" text-anchor="middle" style="fill:#909090">构造</text>
<rect x="1669" y="507" width="22" height="33" rx="3" fill="#5c5c5c"/><rect x="1669" y="541" width="22" height="22" rx="3" fill="#3b3b3b"/>
<text transform="translate(1676,523.500) rotate(90)" text-anchor="middle" style="fill:#f2a020">属性</text>
<text transform="translate(1676,552) rotate(90)" text-anchor="middle" style="fill:#808080">层</text>

<!-- attribute manager -->
<rect x="1120.500" y="506.500" width="546" height="468" fill="#454545" stroke="#333"/>
<path d="M1120 531h547" stroke="#2f2f2f"/>
<rect x="1126" y="513" width="12" height="11" fill="url(#grip)"/>
<text x="1147" y="523">模式</text><text x="1183" y="523">编辑</text><text x="1219" y="523">用户数据</text>
<path d="M1523 519l15-7v14z" fill="#111"/><path d="M1541 519l14-6v11z" fill="#5a5a5a"/><path d="M1574 512l-6 14 6-3 6 3z" fill="#111"/>
<circle cx="1598" cy="515" r="3.500" fill="none" stroke="#222" stroke-width="1.300"/><path d="M1601 518l3 6" stroke="#222" stroke-width="1.800"/>
<rect x="1617" y="518" width="10" height="8" rx="1" fill="none" stroke="#222" stroke-width="1.300"/><path d="M1619 518v-3a3 3 0 0 1 6 0" fill="none" stroke="#222" stroke-width="1.300"/>
<circle cx="1639.500" cy="519" r="6" fill="none" stroke="#222" stroke-width="1.200"/><circle cx="1639.500" cy="519" r="3" fill="none" stroke="#222" stroke-width="1.200"/><rect x="1653" y="512" width="11" height="14" fill="#444" stroke="#222"/><path d="M1654 513h9v2h-9z" fill="#222"/><path d="M1655.500 520h6M1658.500 517v6" stroke="#aaa"/>
<path d="M1128 540l6-3 6 3 0 7-6 5-6-5z" fill="#ddd" stroke="#555" stroke-width=".5"/><circle cx="1134" cy="544" r="2" fill="#444"/><g fill="#3de07a"><circle cx="1134" cy="537" r="1.700"/><circle cx="1127" cy="541" r="1.700"/><circle cx="1141" cy="541" r="1.700"/><circle cx="1134" cy="552" r="1.700"/></g>
<text x="1149" y="549" style="font-size:11px">克隆对象 [克隆]</text>
<rect x="1123.500" y="559.500" width="205" height="18" rx="3" class="g"/><rect x="1205" y="560" width="41" height="17" class="b"/><path d="M1164.500 560v17M1205 560v17M1246 560v17M1287.500 560v17" stroke="#3a3a3a"/>
<text x="1132" y="572">基本</text><text x="1173" y="572">坐标</text><text x="1214" y="572" class="k">对象</text><text x="1254" y="572">变换</text><text x="1291" y="572">效果器</text>
<rect x="1123" y="584" width="541" height="18" fill="#333"/><text x="1125" y="597" style="fill:#b8b8b8">对象属性</text>

<use href="#rd" x="1132" y="616"/><text x="1143" y="620">模式</text><rect x="1170.500" y="607.500" width="491" height="18" rx="4" class="dd"/>
<g fill="#eee"><rect x="1179" y="611" width="2" height="2"/><rect x="1184" y="611" width="2" height="2"/><rect x="1189" y="611" width="2" height="2"/><rect x="1179" y="615" width="2" height="2"/><rect x="1184" y="615" width="2" height="2" fill="#3de08a"/><rect x="1189" y="615" width="2" height="2"/><rect x="1179" y="619" width="2" height="2"/><rect x="1184" y="619" width="2" height="2"/><rect x="1189" y="619" width="2" height="2"/></g>
<text x="1197" y="619">网格排列</text><use href="#ar" x="1654" y="616"/>
<path d="M1123 630.500h541" class="sep"/>
<use href="#rd" x="1132" y="644"/><text x="1143" y="648">克隆</text><rect x="1170.500" y="635.500" width="491" height="18" rx="4" class="dd"/><text x="1177" y="647">迭代</text><use href="#ar" x="1654" y="644"/>
<use href="#rd" x="1132" y="665"/><text x="1143" y="669">固定克隆</text><rect x="1192" y="659" width="11" height="12" rx="2" fill="#333"/><path d="M1194 666l2 3 5-8" stroke="#ddd" fill="none" stroke-width="1.500"/>
<use href="#rd" x="1229" y="665"/><text x="1240" y="669">固定纹理</text><rect x="1288.500" y="656.500" width="64" height="18" rx="4" class="dd"/><text x="1295" y="668">关闭</text><use href="#ar" x="1344" y="665"/>
<use href="#rd" x="1132" y="686"/><text x="1143" y="690">渲染实例</text><rect x="1192" y="680" width="11" height="12" rx="2" fill="#606060"/>
<path d="M1123 700.500h541" class="sep"/>
<use href="#rd" x="1132" y="715"/><text x="1143" y="719">数量</text>
<rect x="1170.500" y="705.500" width="65" height="19" rx="2" class="f"/><rect x="1242.500" y="705.500" width="65" height="19" rx="2" class="f"/><rect x="1314.500" y="705.500" width="65" height="19" rx="2" class="f"/>
<text x="1176" y="719">15</text><text x="1247" y="719">15</text><text x="1319" y="719">15</text><use href="#sp" x="1231" y="715"/><use href="#sp" x="1303" y="715"/><use href="#sp" x="1375" y="715"/>
<path d="M1123 730.500h541" class="sep"/>
<use href="#rd" x="1132" y="744"/><text x="1143" y="748">模式</text><rect x="1170.500" y="735.500" width="491" height="18" rx="4" class="dd"/><text x="1177" y="747">端点</text><use href="#ar" x="1654" y="744"/>
<use href="#rd" x="1132" y="766"/><text x="1143" y="770">尺寸</text>
<rect x="1170.500" y="756.500" width="65" height="19" rx="2" class="f"/><rect x="1242.500" y="756.500" width="65" height="19" rx="2" class="f"/><rect x="1314.500" y="756.500" width="65" height="19" rx="2" class="f"/>
<text x="1176" y="770">1400 cm</text><text x="1247" y="770">700 cm</text><text x="1319" y="770">1400 cm</text><use href="#sp" x="1231" y="766"/><use href="#sp" x="1303" y="766"/><use href="#sp" x="1375" y="766"/>
<path d="M1123 781.500h541" class="sep"/>
<use href="#rd" x="1132" y="796"/><text x="1143" y="800">外形</text><rect x="1170.500" y="786.500" width="52" height="18" rx="4" class="dd"/><text x="1177" y="799">立方</text><use href="#ar" x="1215" y="795"/>
<use href="#rd" x="1234" y="796"/><text x="1245" y="800">填充</text><rect x="1272.500" y="786.500" width="65" height="19" rx="2" class="f"/><text x="1277" y="800">100 %</text><use href="#sp" x="1333" y="796"/>

<!-- watermark -->
<circle cx="1473" cy="852" r="24" fill="#fff" stroke="#2a8ef0" stroke-width="2.500"/><circle cx="1473" cy="852" r="21.500" fill="none" stroke="#111" stroke-width="1"/>
<path d="M1467 849h12l-1 8-5 4-5-4z" fill="#111"/><path d="M1467 848l-6-4-3-5M1461 844l-3 1M1463 846l-2-7M1479 848l6-4 3-5M1485 844l3 1M1483 846l2-7" stroke="#111" stroke-width="1.500" fill="none"/>
<text x="1473" y="869" text-anchor="middle" style="font-size:7px;font-weight:bold;fill:#111">行本易</text>

<!-- timeline -->
<rect x="40" y="781" width="6" height="15" fill="url(#grip)"/>
<rect x="48.500" y="776.500" width="995" height="21" rx="2" fill="#303030" stroke="#222"/>
<path d="M49 792h994" stroke="#3e3e3e"/>
<rect x="51" y="776" width="9" height="17" fill="#3ee07c"/>
<rect x="49" y="793" width="994" height="4" fill="url(#tick)"/>
<path d="M55.500 793v4M110 793v4M164.500 793v4M219 793v4M273.500 793v4M328 793v4M382.500 777v20M437 793v4M491.500 793v4M546 793v4M600.500 793v4M655 793v4M709.500 777v20M764 793v4M818.500 793v4M873 793v4M927.500 793v4M982 793v4M1037 777v20" stroke="#999"/>
<g text-anchor="middle">
<text x="64" y="788" style="fill:#3ee07c">0</text><text x="109" y="788">5</text><text x="164" y="788">10</text><text x="218" y="788">15</text><text x="273" y="788">20</text><text x="327" y="788">25</text><text x="382" y="788">30</text><text x="437" y="788">35</text><text x="491" y="788">40</text><text x="546" y="788">45</text><text x="600" y="788">50</text><text x="655" y="788">55</text><text x="710" y="788">60</text><text x="764" y="788">65</text><text x="819" y="788">70</text><text x="873" y="788">75</text><text x="928" y="788">80</text><text x="983" y="788">85</text><text x="1037" y="788">90</text></g>
<rect x="1050.500" y="778.500" width="67" height="21" rx="2" class="f"/><text x="1055" y="793">0 F</text><use href="#sp" x="1111" y="789"/>

<!-- playback -->
<rect x="40" y="806" width="6" height="21" fill="url(#grip)"/>
<rect x="49.500" y="806.500" width="65" height="19" rx="2" class="f"/><text x="54" y="820">0 F</text><use href="#sp" x="110" y="816"/>
<rect x="122.500" y="807.500" width="414" height="18" rx="4" class="dd"/><path d="M130 813l-5 3.500 5 3.500z" fill="#999"/><path d="M525 813l5 3.500-5 3.500z" fill="#ccc"/><text x="138" y="820" style="fill:#444">0 F</text><text x="497" y="820" style="fill:#444">90 F</text>
<rect x="543.500" y="806.500" width="66" height="19" rx="2" class="f"/><text x="547" y="820">90 F</text><use href="#sp" x="604" y="816"/>
<rect x="620.500" y="803.500" width="26" height="26" rx="3" class="g"/><path d="M626 810h3v13h-3zM630 816.500l6-6.500v13zM635 816.500l6-6.500v13z" fill="#1a1a1a"/>
<rect x="657.500" y="803.500" width="139" height="26" rx="3" class="g"/><path d="M685 804v25M713 804v25M741 804v25M769 804v25" stroke="#4c4c4c"/>
<path d="M680 809a9 9 0 1 0 0 15" fill="none" stroke="#1a1a1a" stroke-width="4"/><path d="M680 816.500h-8" stroke="#1a1a1a" stroke-width="3"/><path d="M668 816.500l5-4v8z" fill="#1a1a1a"/>
<path d="M692 816.500l7-5v10z" fill="#1a1a1a"/><path d="M704 811c-2 3-2 8 0 11" stroke="#1a1a1a" fill="none" stroke-width="2"/>
<path d="M720 809l14 7.500-14 7.500z" fill="#3ee07c" stroke="#1a1a1a"/>
<path d="M748 811c2 3 2 8 0 11" stroke="#1a1a1a" fill="none" stroke-width="2"/><path d="M753 811.500l7 5-7 5z" fill="#1a1a1a"/>
<path d="M774 809a9 9 0 1 1 0 15" fill="none" stroke="#1a1a1a" stroke-width="4"/><path d="M775 816.500h8" stroke="#1a1a1a" stroke-width="3"/>
<rect x="808.500" y="803.500" width="26" height="26" rx="3" class="g"/><path d="M813 810l6 6.500-6 6.500zM819 810l6 6.500-6 6.500z" fill="#1a1a1a"/><rect x="825" y="810" width="3" height="13" fill="#1a1a1a"/>
<rect x="846.500" y="803.500" width="82" height="26" rx="3" class="g"/><path d="M873 804v25M901 804v25" stroke="#4c4c4c"/>
<circle cx="859" cy="816.500" r="10" fill="#e84a50" stroke="#222" stroke-width="1.400"/><path d="M853 822l8-8" stroke="#222" stroke-width="3"/><circle cx="863" cy="812" r="2.500" fill="none" stroke="#222" stroke-width="1.500"/>
<circle cx="887" cy="816.500" r="10" fill="#e84a50" stroke="#222" stroke-width="1.400"/><path d="M885 811c-3 3-3 8 0 11M889 811c3 3 3 8 0 11" stroke="#222" fill="none" stroke-width="2.200"/>
<circle cx="915" cy="816.500" r="10" fill="#e84a50" stroke="#222" stroke-width="1.400"/><text x="915" y="822" text-anchor="middle" class="k" style="font-size:15px;font-weight:bold">?</text>
<rect x="940.500" y="803.500" width="138" height="26" rx="3" class="g"/><path d="M941 807q0-3 3-3h107v25H944q-3 0-3-3z" class="b"/><path d="M967 804v25M995 804v25M1023 804v25" stroke="#586a8c"/>
<use href="#mv" x="953" y="816.500"/>
<rect x="973" y="809" width="15" height="15" fill="#f08a1e" stroke="#333"/><path d="M980 824v-7h8M980 817l8-8" stroke="#333" fill="none"/>
<path d="M1003 821a9 9 0 0 1 6-12M1015 812a9 9 0 0 1-6 12" fill="none" stroke="#f08a1e" stroke-width="2.500"/>
<circle cx="1037" cy="816.500" r="11" fill="#8ba8d2" stroke="#b06a2a" stroke-width="2"/><text x="1037" y="822" text-anchor="middle" class="k" style="font-size:15px;font-weight:bold">P</text>
<g fill="#e8902a"><circle cx="1058" cy="812" r="2.500"/><circle cx="1066" cy="812" r="2.500"/><circle cx="1058" cy="820" r="2.500"/><circle cx="1066" cy="820" r="2.500"/></g><g fill="#1a1a1a"><circle cx="1074" cy="812" r="2.500"/><circle cx="1074" cy="820" r="2.500"/><circle cx="1058" cy="827" r="2.300"/><circle cx="1066" cy="827" r="2.300"/><circle cx="1074" cy="827" r="2.300"/></g>
<rect x="1090" y="803" width="28" height="27" rx="3" class="b"/><rect x="1098" y="807" width="13" height="20" fill="#e8902a" stroke="#222" stroke-width="1.600"/><path d="M1098 813h13M1098 820h13" stroke="#222"/><use href="#cr" x="1112" y="829"/>

<!-- material -->
<rect x="40.500" y="833.500" width="772" height="120" fill="#454545" stroke="#333"/><path d="M41 857.500h771" stroke="#2f2f2f"/>
<rect x="46" y="839" width="12" height="12" fill="url(#grip)"/>
<text x="67" y="850">创建</text><text x="103" y="850">编辑</text><text x="139" y="850">功能</text><text x="175" y="850">纹理</text>
<!-- coords -->
<rect x="818.500" y="833.500" width="299" height="120" fill="#454545" stroke="#333"/><path d="M819 853.500h298" stroke="#2f2f2f"/>
<rect x="823" y="839" width="11" height="11" fill="url(#grip)"/>
<text x="841" y="848">位置</text><text x="934" y="848">尺寸</text><text x="1027" y="848">旋转</text>
<g style="font-size:12px">
<text x="821" y="874">X</text><text x="821" y="897">Y</text><text x="821" y="920">Z</text><text x="919" y="874">X</text><text x="919" y="897">Y</text><text x="919" y="920">Z</text><text x="1018" y="874">H</text><text x="1018" y="897">P</text><text x="1018" y="920">B</text></g>
<rect x="831.500" y="859.500" width="84" height="20" rx="2" class="f"/><rect x="831.500" y="882.500" width="84" height="20" rx="2" class="f"/><rect x="831.500" y="905.500" width="84" height="20" rx="2" class="f"/>
<rect x="930.500" y="859.500" width="84" height="20" rx="2" class="f"/><rect x="930.500" y="882.500" width="84" height="20" rx="2" class="f"/><rect x="930.500" y="905.500" width="84" height="20" rx="2" class="f"/>
<rect x="1030.500" y="859.500" width="83" height="20" rx="2" class="f"/><rect x="1030.500" y="882.500" width="83" height="20" rx="2" class="f"/><rect x="1030.500" y="905.500" width="83" height="20" rx="2" class="f"/>
<text x="837" y="874">0 cm</text><text x="837" y="897">0 cm</text><text x="837" y="920">0 cm</text><text x="935" y="874">1500 cm</text><text x="935" y="897">750 cm</text><text x="935" y="920">1500 cm</text><text x="1035" y="874">0 °</text><text x="1035" y="897">0 °</text><text x="1035" y="920">0 °</text>
<use href="#sp" x="911" y="869"/><use href="#sp" x="911" y="892"/><use href="#sp" x="911" y="915"/><use href="#sp" x="1010" y="869"/><use href="#sp" x="1010" y="892"/><use href="#sp" x="1010" y="915"/><use href="#sp" x="1108" y="869"/><use href="#sp" x="1108" y="892"/><use href="#sp" x="1108" y="915"/>
<rect x="831.500" y="931.500" width="84" height="18" rx="4" class="dd"/><text x="838" y="943">对象 (相对)</text><use href="#ar" x="907" y="940"/>
<rect x="929.500" y="931.500" width="84" height="18" rx="4" class="dd"/><text x="937" y="943">绝对尺寸</text><use href="#ar" x="1005" y="940"/>
<rect x="1030.500" y="931.500" width="82" height="18" rx="9" class="dd"/><text x="1071" y="944" text-anchor="middle">应用</text>

<!-- logo -->
<text transform="translate(18,948) rotate(-90)" textLength="58" lengthAdjust="spacingAndGlyphs" style="font-size:17px;font-weight:bold;font-style:italic;fill:#8e8e8e">MAXON</text>
<text transform="translate(35,948) rotate(-90)" textLength="81" lengthAdjust="spacingAndGlyphs" style="font-size:17px;fill:#7e7e7e">CINEMA 4D</text>

<!-- status -->
<path d="M0 956h1119" stroke="#5a5a5a"/>
<rect x="6" y="960" width="11" height="12" fill="url(#grip)"/><text x="27" y="970">增加简易对象</text>

<!-- annotations -->
<g fill="none" stroke="#f00" stroke-width="2">
<rect x="459.500" y="32" width="67" height="26"/>
<rect x="456.500" y="63.500" width="154" height="31"/>
<rect x="618.500" y="94.500" width="114" height="32"/>
<rect x="1113" y="77.500" width="105" height="33"/>
<path d="M1028 56L1072 77"/>
</g>
<path d="M1085 83l-20-1 6-12z" fill="#f00"/>
</svg>
</body></html>
